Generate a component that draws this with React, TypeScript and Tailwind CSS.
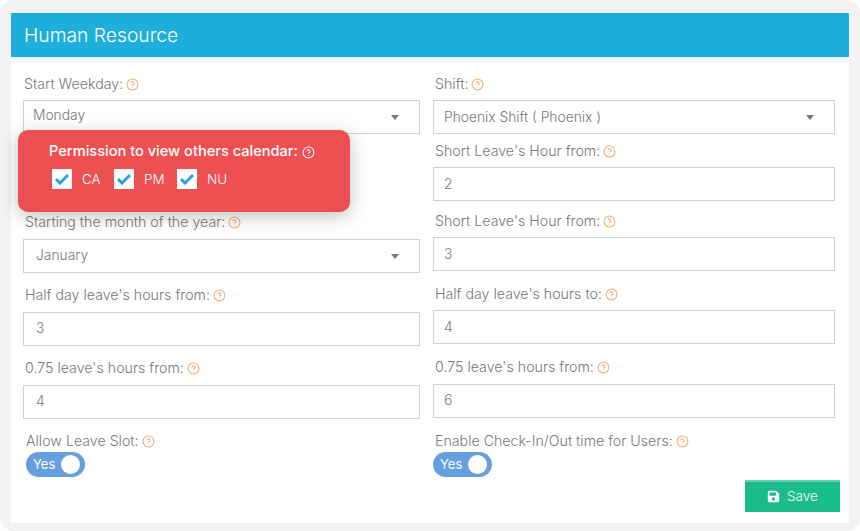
import { CircleHelp } from "lucide-react";
import { FaSave } from "react-icons/fa";

const font = { fontFamily: '"Inter", "Liberation Sans", sans-serif' };

function Help({ white }: { white?: boolean }) {
  return (
    <CircleHelp
      size={13}
      strokeWidth={1.9}
      className={white ? "text-white shrink-0 ml-[4px]" : "text-[#f2a86f] shrink-0 ml-[3px]"}
    />
  );
}

function Label({ text, className = "" }: { text: string; className?: string }) {
  return (
    <div className={"flex items-center h-5 text-[14.2px] font-light text-[#777] " + className}>
      <span>{text}</span>
      <Help />
    </div>
  );
}

function Box({ value, select, className = "", textClass = "" }: { value: string; select?: boolean; className?: string; textClass?: string }) {
  return (
    <div className={"flex items-center justify-between h-[34px] border border-[#ccd2dc] bg-white text-[13.8px] font-light text-[#777] " + className}>
      <span className={textClass}>{value}</span>
      {select && <span className="w-0 h-0 mr-5 border-l-[4.5px] border-r-[4.5px] border-t-[5px] border-l-transparent border-r-transparent border-t-[#777]" />}
    </div>
  );
}

function Toggle({ className = "" }: { className?: string }) {
  return (
    <div className={"flex items-center justify-between w-[59px] h-[25px] rounded-full bg-[#669fdd] pl-[7px] pr-[5px] text-[13px] text-white " + className}>
      <span>Yes</span>
      <span className="w-[19px] h-[19px] rounded-full bg-white" />
    </div>
  );
}

function Check({ label, className = "" }: { label: string; className?: string }) {
  return (
    <div className={"flex items-center " + className}>
      <span className="flex items-center justify-center w-5 h-5 bg-white">
        <svg width="16" height="12" viewBox="0 0 16 12" fill="none">
          <path d="M2 6.2 L6 10 L14 2" stroke="#2f9fe8" strokeWidth="3" />
        </svg>
      </span>
      <span className="ml-[10px] text-[13.4px] font-light text-white">{label}</span>
    </div>
  );
}

export default function App() {
  return (
    <div className="relative w-[860px] h-[531px] bg-white overflow-hidden" style={font}>
      <div className="w-full h-full rounded-[14px] bg-[#f2f2f2] pt-[13px] pl-[11px] pr-[11px] pb-2">
        <div className="h-[510px] bg-white">
          <div className="flex items-center h-11 bg-[#1eaedb] pl-[13px] pt-px text-[19.3px] font-light text-white">Human Resource</div>
          <div className="h-[5px] bg-[#f8f8f8]" />
          <div className="relative flex pt-3 pl-3 pr-[14px]">
            <div className="w-[397px] shrink-0">
              <Label text="Start Weekday:" className="ml-px" />
              <Box select value="Monday" className="mt-[6px]" textClass="ml-[9px] -mt-[3px]" />
              <Label text="Starting the month of the year:" className="mt-[78px] ml-[2px]" />
              <Box select value="January" className="mt-[7px]" textClass="ml-3 -mt-[1px]" />
              <Label text="Half day leave's hours from:" className="mt-3 ml-[2px]" />
              <Box value="3" className="mt-[7px]" textClass="ml-3 -mt-[1px]" />
              <Label text="0.75 leave's hours from:" className="mt-3 ml-[2px]" />
              <Box value="4" className="mt-[7px]" textClass="ml-3 -mt-[1px]" />
              <Label text="Allow Leave Slot:" className="mt-3 ml-[3px]" />
              <Toggle className="mt-px ml-[3px]" />
            </div>
            <div className="w-[402px] ml-[13px] shrink-0">
              <Label text="Shift:" className="ml-[2px]" />
              <Box select value="Phoenix Shift ( Phoenix )" className="mt-[6px]" textClass="ml-[10px]" />
              <Label text="Short Leave's Hour from:" className="mt-[7px] ml-[2px]" />
              <Box value="2" className="mt-[6px]" textClass="ml-[10px]" />
              <Label text="Short Leave's Hour from:" className="mt-[10px] ml-[2px]" />
              <Box value="3" className="mt-[6px]" textClass="ml-[10px]" />
              <Label text="Half day leave's hours to:" className="mt-[13px] ml-[2px]" />
              <Box value="4" className="mt-[6px]" textClass="ml-[10px]" />
              <Label text="0.75 leave's hours from:" className="mt-[13px] ml-[2px]" />
              <Box value="6" className="mt-[7px]" textClass="ml-[10px] -mt-[1px]" />
              <Label text="Enable Check-In/Out time for Users:" className="mt-[13px] ml-[2px]" />
              <div className="flex items-start justify-between">
                <Toggle className="mt-px" />
                <button className="flex items-center justify-center gap-[7px] w-[95px] h-8 mt-[29px] -mr-[5px] pb-[2px] bg-[#1abc8c] border-t-2 border-[#5fd3b0] text-[13.5px] font-light text-white">
                  <FaSave size={13} />
                  Save
                </button>
              </div>
            </div>
          </div>
        </div>
      </div>
      <div className="absolute left-[18px] top-[130px] w-[332px] h-[82px] rounded-[10px] bg-[#ed5052] pl-[31px] pt-[12px] shadow-[0_4px_18px_rgba(0,0,0,0.25)]">
        <div className="flex items-center h-[20px] text-[14.6px] font-medium text-white">
          <span>Permission to view others calendar:</span>
          <Help white />
        </div>
        <div className="flex items-center mt-[7px] ml-[3px]">
          <Check label="CA" className="w-[62px]" />
          <Check label="PM" className="w-[63px]" />
          <Check label="NU" />
        </div>
      </div>
    </div>
  );
}
